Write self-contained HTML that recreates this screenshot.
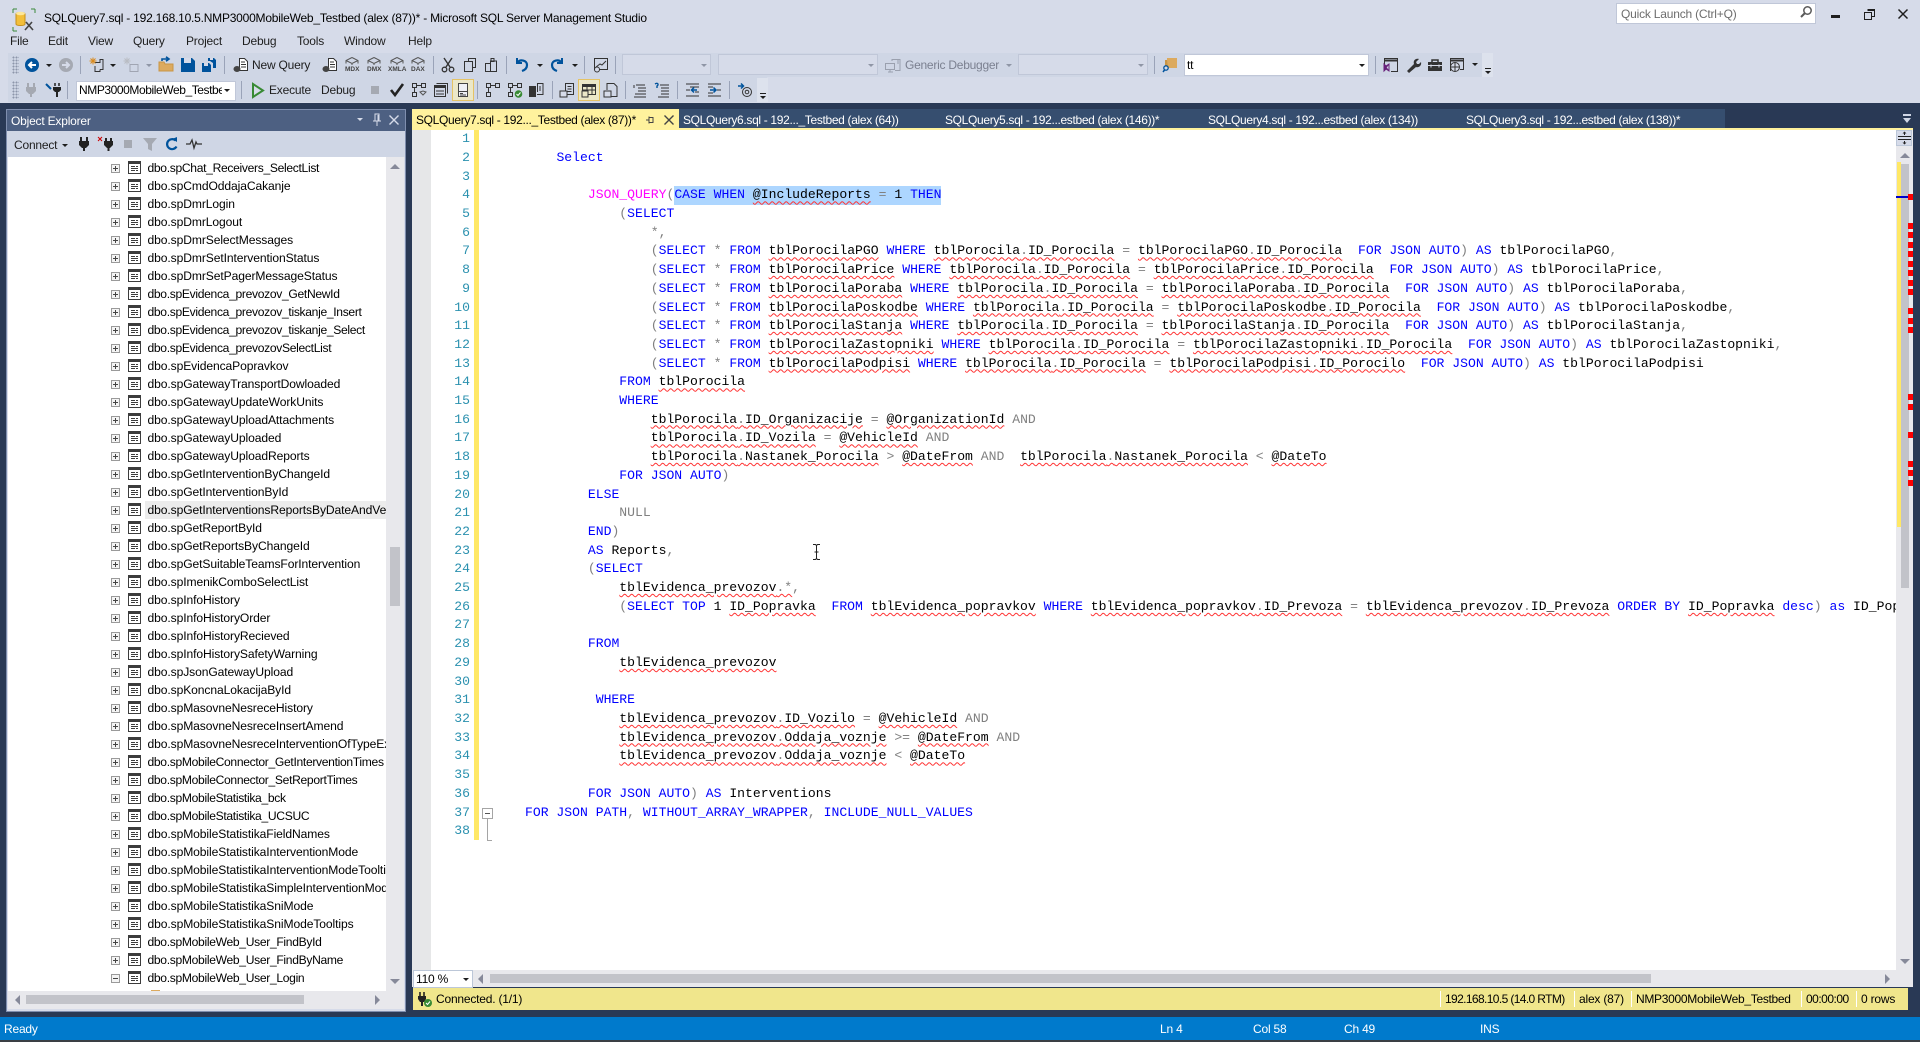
<!DOCTYPE html>
<html><head><meta charset="utf-8"><title>SSMS</title>
<style>
html,body{margin:0;padding:0;width:1920px;height:1042px;overflow:hidden;background:#293955}
body{position:relative;font-family:"Liberation Sans",sans-serif;font-size:12px;letter-spacing:-.2px;color:#1e1e1e}
.a,.t,svg.i{position:absolute}
.t{white-space:pre;line-height:16px;height:16px}
.tab{letter-spacing:-.33px}
svg.i{width:16px;height:16px;overflow:visible}
.sep{position:absolute;width:1px;background:#9aa3b8;height:18px}
.grip{position:absolute;width:7px;height:18px;background:radial-gradient(#8d96aa .9px,transparent 1.1px) 0 0/3px 3px}
.dd{position:absolute;width:0;height:0;border-left:3px solid transparent;border-right:3px solid transparent;border-top:3px solid #1e1e1e}
.dd.g{border-top-color:#8f96a6}
.cmb{position:absolute;box-sizing:border-box;border:1px solid #c0c7d8;background:#d6dbe9}
/* tree */
#tree{position:absolute;left:8px;top:157px;width:378px;height:834px;background:#fff;overflow:hidden;font-size:12.1px;letter-spacing:-.1px;color:#000}
.r{position:relative;height:18px;line-height:18px;padding-left:139.5px;white-space:nowrap;box-sizing:border-box}
.r.s{letter-spacing:-.32px}
.r:first-child{margin-top:2px}
.r::before{content:"";position:absolute;left:103px;top:5px;width:7px;height:7px;border:1px solid #9a9a9a;background:linear-gradient(#444,#444) center/5px 1px no-repeat,linear-gradient(#444,#444) center/1px 5px no-repeat,#f4f4f4}
.r.mn::before{background:linear-gradient(#444,#444) center/5px 1px no-repeat,#f4f4f4}
.r svg{position:absolute;left:120px;top:2px;width:13px;height:13px}
.r.h{background:linear-gradient(90deg,#fff 137px,#ececec 137px)}
/* code */
#num,#code{position:absolute;font-family:"Liberation Mono",monospace;font-size:13.1px;letter-spacing:0;line-height:18.7px;white-space:pre;margin:0}
#num{left:431px;width:39px;top:130.2px;text-align:right;color:#2b91af}
#code{left:525px;top:130.2px;width:1371px;height:800px;overflow:hidden;color:#000}
.k{color:#00f}.g{color:#808080}.m{color:#f0f}
u{text-decoration:underline wavy #f33;text-decoration-thickness:1px;text-underline-offset:2px}
</style></head>
<body>
<svg width="0" height="0" style="position:absolute"><defs>
<symbol id="sp" viewBox="0 0 13 13"><rect x=".5" y=".5" width="12" height="12" fill="#fff" stroke="#3c3c3c"/><rect x="0" y="0" width="13" height="3" fill="#3c3c3c"/><path d="M3 5.500h4M3 7.500h7M3 9.500h4M8 5.500h2M8 9.500h2" stroke="#3c3c3c" fill="none"/></symbol>
<symbol id="cube" viewBox="0 0 16 12"><path d="M8 .5l6 3v3M8 .5l-6 3v3M2 3.500l6 3 6-3M8 6.500V8" fill="none" stroke="#555"/></symbol>
</defs></svg>

<!-- top chrome -->
<div class="a" style="left:0;top:0;width:1920px;height:103px;background:#d6dbe9"></div>
<svg class="i" style="left:12px;top:8px;width:24px;height:24px" viewBox="0 0 24 24"><path d="M1 1h4M1 1v4M19 1h4M23 1v4M1 23h4M1 19v4" stroke="#3a8a3a" fill="none"/><path d="M4 6c0-2 9-2 9 0v10c0 2-9 2-9 0z" fill="#f3bf3a" stroke="#c48f1a"/><ellipse cx="8.500" cy="5.500" rx="4.500" ry="1.800" fill="#fde79a"/><path d="M13 22l7-8M14 14l7 8" stroke="#444" stroke-width="1.600"/></svg>
<div class="t" style="left:44px;top:10px;color:#000;letter-spacing:-.22px">SQLQuery7.sql - 192.168.10.5.NMP3000MobileWeb_Testbed (alex (87))* - Microsoft SQL Server Management Studio</div>

<div class="t" style="left:10px;top:33px">File</div>
<div class="t" style="left:48px;top:33px">Edit</div>
<div class="t" style="left:88px;top:33px">View</div>
<div class="t" style="left:133px;top:33px">Query</div>
<div class="t" style="left:186px;top:33px">Project</div>
<div class="t" style="left:242px;top:33px">Debug</div>
<div class="t" style="left:297px;top:33px">Tools</div>
<div class="t" style="left:344px;top:33px">Window</div>
<div class="t" style="left:408px;top:33px">Help</div>

<!-- quick launch -->
<div class="a" style="left:1616px;top:3px;width:198px;height:19px;background:#fff;border:1px solid #c0c7d8"></div>
<div class="t" style="left:1621px;top:6px;color:#6d6d6d">Quick Launch (Ctrl+Q)</div>
<svg class="i" style="left:1799px;top:5px;width:14px;height:14px" viewBox="0 0 14 14"><circle cx="8.500" cy="5.500" r="3.700" fill="none" stroke="#5a5a5a" stroke-width="1.500"/><path d="M6 8l-4 4" stroke="#5a5a5a" stroke-width="2"/></svg>
<div class="a" style="left:1831px;top:15px;width:9px;height:3px;background:#1e1e1e"></div>
<svg class="i" style="left:1864px;top:9px;width:11px;height:11px" viewBox="0 0 11 11"><path d="M3.500.5h7v7h-3M.5 3.500h7v7h-7z" fill="none" stroke="#1e1e1e"/><path d="M.5 3.500h7M3.500 1.500h7" stroke="#1e1e1e"/></svg>
<svg class="i" style="left:1898px;top:9px;width:10px;height:10px" viewBox="0 0 10 10"><path d="M.5.500l9 9M9.500.500l-9 9" stroke="#1e1e1e" stroke-width="1.500"/></svg>

<!-- toolbar 1 bg -->
<div class="a" style="left:8px;top:53px;width:1484px;height:24px;background:#cfd6e5"></div>
<div class="a" style="left:8px;top:77px;width:759px;height:25px;background:#cfd6e5"></div>
<div class="a" style="left:1482px;top:53px;width:11px;height:24px;background:#dde2ed"></div>
<div class="a" style="left:757px;top:78px;width:11px;height:24px;background:#dde2ed"></div>
<div class="grip" style="left:12px;top:56px"></div>
<div class="grip" style="left:12px;top:81px"></div>

<svg class="i" style="left:24px;top:57px" viewBox="0 0 16 16"><circle cx="8" cy="8" r="7" fill="#00539c"/><path d="M12 8H5M8 5L5 8l3 3" fill="none" stroke="#fff" stroke-width="2"/></svg>
<div class="dd" style="left:46px;top:64px"></div>
<svg class="i" style="left:58px;top:57px" viewBox="0 0 16 16"><circle cx="8" cy="8" r="7" fill="#a5a9b2"/><path d="M4 8h7M8 5l3 3-3 3" fill="none" stroke="#d6dbe9" stroke-width="2"/></svg>
<div class="sep" style="left:80px;top:56px"></div>
<svg class="i" style="left:89px;top:57px" viewBox="0 0 16 16"><path d="M6 5.500h5V2.500h3v10h-3M6 9v5.500h5v-2" fill="none" stroke="#333"/><path d="M4 .5v7M.5 4h7M1.500 1.500l5 5M6.500 1.500l-5 5" stroke="#d98a1e"/></svg>
<div class="dd" style="left:110px;top:64px"></div>
<svg class="i" style="left:123px;top:57px" viewBox="0 0 16 16"><path d="M7 7.500h8v7H7z" fill="none" stroke="#a0a5b2"/><path d="M4 .5v7M.5 4h7M1.500 1.500l5 5M6.500 1.500l-5 5" stroke="#b9bcc3"/></svg>
<div class="dd g" style="left:146px;top:64px"></div>
<svg class="i" style="left:158px;top:56px" viewBox="0 0 16 16"><path d="M1 6h5l1 2h8v7H1z" fill="#dcaa5f" stroke="#c99545"/><path d="M4 5V3h7M8 .8l3 2.200-3 2.200" fill="none" stroke="#00539c" stroke-width="1.600"/></svg>
<svg class="i" style="left:180px;top:57px" viewBox="0 0 16 16"><path d="M1 1h11l3 3v11H1z" fill="#00539c"/><rect x="4" y="1" width="7" height="5" fill="#d6dbe9"/></svg>
<svg class="i" style="left:201px;top:57px" viewBox="0 0 16 16"><path d="M1 6h7l2 2v7H1z" fill="#00539c"/><path d="M7 1h6l2 2v8h-3V6L9 4H7z" fill="#00539c"/><rect x="3" y="6" width="4" height="3" fill="#d6dbe9"/><rect x="9" y="1" width="3" height="2" fill="#d6dbe9"/></svg>
<div class="sep" style="left:224px;top:56px"></div>
<svg class="i" style="left:233px;top:57px" viewBox="0 0 16 16"><path d="M6.500 1.500h5l3 3v9h-8z" fill="#fff" stroke="#333"/><path d="M8 5h4M8 7.500h5M8 10h5" stroke="#333"/><ellipse cx="4" cy="12" rx="3.500" ry="3" fill="#444"/></svg>
<div class="t" style="left:252px;top:57px">New Query</div>
<svg class="i" style="left:322px;top:57px" viewBox="0 0 16 16"><path d="M6.500 1.500h5l3 3v9h-8z" fill="#fff" stroke="#333"/><path d="M8 5h4M8 7.500h5M8 10h5" stroke="#333"/><ellipse cx="4" cy="12" rx="3.500" ry="3" fill="#444"/></svg>
<svg class="i" style="left:344px;top:57px;height:12px" viewBox="0 0 16 12"><use href="#cube"/></svg><div class="t" style="left:345px;top:66px;font-size:6.500px;font-weight:bold;color:#444;line-height:8px;height:8px;letter-spacing:0">MDX</div>
<svg class="i" style="left:366px;top:57px;height:12px" viewBox="0 0 16 12"><use href="#cube"/></svg><div class="t" style="left:367px;top:66px;font-size:6.500px;font-weight:bold;color:#444;line-height:8px;height:8px;letter-spacing:0">DMX</div>
<svg class="i" style="left:389px;top:57px;height:12px" viewBox="0 0 16 12"><use href="#cube"/></svg><div class="t" style="left:388px;top:66px;font-size:6.500px;font-weight:bold;color:#444;line-height:8px;height:8px;letter-spacing:0">XMLA</div>
<svg class="i" style="left:410px;top:57px;height:12px" viewBox="0 0 16 12"><use href="#cube"/></svg><div class="t" style="left:411px;top:66px;font-size:6.500px;font-weight:bold;color:#444;line-height:8px;height:8px;letter-spacing:0">DAX</div>
<div class="sep" style="left:433px;top:56px"></div>
<svg class="i" style="left:440px;top:57px" viewBox="0 0 16 16"><path d="M4 1l6 9M12 1L6 10" stroke="#333" stroke-width="1.400" fill="none"/><circle cx="4.500" cy="12.500" r="2.300" fill="none" stroke="#333" stroke-width="1.300"/><circle cx="11.500" cy="12.500" r="2.300" fill="none" stroke="#333" stroke-width="1.300"/></svg>
<svg class="i" style="left:462px;top:57px" viewBox="0 0 16 16"><path d="M6.500 4V1.500h7v9H11M2.500 4.500h8v10h-8z" fill="none" stroke="#333"/></svg>
<svg class="i" style="left:483px;top:57px" viewBox="0 0 16 16"><path d="M2.500 6.500h5v8h-5zM7.500 6.500V4h6v10.500h-6" fill="none" stroke="#333"/><path d="M8 1.500h3v3H8z" fill="none" stroke="#333"/></svg>
<div class="sep" style="left:506px;top:56px"></div>
<svg class="i" style="left:514px;top:57px" viewBox="0 0 16 16"><path d="M3 1v5h5" fill="none" stroke="#00539c" stroke-width="2"/><path d="M3.500 5.500C6 2 13 3 13 8c0 3-2 5-5 6" fill="none" stroke="#00539c" stroke-width="2.200"/></svg>
<div class="dd" style="left:537px;top:64px"></div>
<svg class="i" style="left:549px;top:57px" viewBox="0 0 16 16"><path d="M13 1v5H8" fill="none" stroke="#00539c" stroke-width="2"/><path d="M12.500 5.500C10 2 3 3 3 8c0 3 2 5 5 6" fill="none" stroke="#00539c" stroke-width="2.200"/></svg>
<div class="dd" style="left:572px;top:64px"></div>
<div class="sep" style="left:584px;top:56px"></div>
<svg class="i" style="left:593px;top:57px" viewBox="0 0 16 16"><path d="M1.500 1.500h13v11h-13z" fill="none" stroke="#333"/><path d="M3 10l4-3 2 1 4-4" fill="none" stroke="#333"/><circle cx="4" cy="12.500" r="2.500" fill="#d6dbe9" stroke="#333"/></svg>
<div class="sep" style="left:615px;top:56px"></div>
<div class="cmb" style="left:622px;top:54px;width:89px;height:21px"></div><div class="dd g" style="left:701px;top:64px"></div>
<div class="cmb" style="left:718px;top:54px;width:160px;height:21px"></div><div class="dd g" style="left:868px;top:64px"></div>
<svg class="i" style="left:885px;top:57px" viewBox="0 0 16 16"><path d="M.5 6.500h9v6h-9zM3 15h5M5 13v2M7 4V2.500h8v11h-5" fill="none" stroke="#9aa0ae"/><path d="M12 4h2M12 6h2" stroke="#9aa0ae"/></svg>
<div class="t" style="left:905px;top:57px;color:#7b8090;letter-spacing:-.25px">Generic Debugger</div>
<div class="dd g" style="left:1006px;top:64px"></div>
<div class="cmb" style="left:1018px;top:54px;width:130px;height:21px"></div><div class="dd g" style="left:1138px;top:64px"></div>
<div class="sep" style="left:1154px;top:56px"></div>
<svg class="i" style="left:1162px;top:57px" viewBox="0 0 16 16"><rect x="5" y="1" width="10" height="10" fill="#dcaa5f"/><path d="M5 3h-2v8h3" fill="#c99545"/><circle cx="4" cy="11" r="2.200" fill="#d6dbe9" stroke="#00539c" stroke-width="1.300"/><path d="M2.500 13L1 15" stroke="#00539c" stroke-width="1.500"/></svg>
<div class="a" style="left:1184px;top:54px;width:183px;height:20px;background:#fff;border:1px solid #c0c7d8"></div>
<div class="t" style="left:1187px;top:57px;color:#000">tt</div>
<div class="dd" style="left:1359px;top:64px"></div>
<div class="sep" style="left:1375px;top:56px"></div>
<svg class="i" style="left:1383px;top:57px" viewBox="0 0 16 16"><path d="M1.500 9V1.500h13v13H8" fill="none" stroke="#333"/><path d="M1 3.500h14" stroke="#333" stroke-width="2"/><path d="M1 7l2 2 3-2v7l-3-2-2 2zM6 7l-3 3.500L6 14" fill="#68217a" stroke="#68217a"/></svg>
<svg class="i" style="left:1405px;top:57px" viewBox="0 0 16 16"><path d="M2 14l7-7c-1-3 1-6 5-5l-3 3 1 2 2 0 2-2c1 4-3 6-5 5l-7 6z" fill="#333"/></svg>
<svg class="i" style="left:1427px;top:57px" viewBox="0 0 16 16"><path d="M1 5h14v9H1z" fill="#333"/><path d="M5 5V3h6v2" fill="none" stroke="#333" stroke-width="1.500"/><path d="M1 8.500h14M4 7.500v3M12 7.500v3" stroke="#d6dbe9"/></svg>
<svg class="i" style="left:1449px;top:57px" viewBox="0 0 16 16"><path d="M1.500 14V1.500h13v11H11" fill="none" stroke="#333"/><path d="M1 3.500h14" stroke="#333" stroke-width="2"/><circle cx="6" cy="10" r="4.500" fill="#d6dbe9" stroke="#333"/><path d="M1.500 10h9M6 5.500v9" stroke="#333"/></svg>
<div class="dd" style="left:1472px;top:63px"></div>
<div class="a" style="left:1485px;top:68px;width:6px;height:1px;background:#1e1e1e"></div><div class="dd" style="left:1485px;top:71px"></div>

<!-- toolbar 2 -->
<svg class="i" style="left:23px;top:82px" viewBox="0 0 16 16"><path d="M5 1v4M11 1v4" stroke="#a5a9b2" stroke-width="2"/><path d="M3 5h10v4l-3 3H6L3 9z" fill="#a5a9b2"/><path d="M8 12v3" stroke="#a5a9b2" stroke-width="2"/></svg>
<svg class="i" style="left:45px;top:82px" viewBox="0 0 16 16"><path d="M1 2l5 5" stroke="#00539c" stroke-width="2"/><path d="M10 1v3M14 1v3" stroke="#222" stroke-width="1.500"/><path d="M8 5h8v3l-2 2h-4L8 8z" fill="#222"/><path d="M12 10v5" stroke="#222" stroke-width="2"/></svg>
<div class="sep" style="left:67px;top:81px"></div>
<div class="a" style="left:76px;top:81px;width:158px;height:18px;background:#fff;border:1px solid #c0c7d8;box-sizing:content-box"></div>
<div class="a" style="left:79px;top:82px;width:143px;height:16px;overflow:hidden;white-space:nowrap;line-height:16px;color:#000;letter-spacing:-.42px">NMP3000MobileWeb_Testbed</div>
<div class="dd" style="left:224px;top:89px"></div>
<div class="sep" style="left:241px;top:81px"></div>
<svg class="i" style="left:250px;top:82px" viewBox="0 0 16 16"><path d="M3 2l10 6.500L3 15z" fill="#d6dbe9" stroke="#388a34" stroke-width="2"/></svg>
<div class="t" style="left:269px;top:82px">Execute</div>
<div class="t" style="left:321px;top:82px">Debug</div>
<div class="a" style="left:371px;top:86px;width:8px;height:8px;background:#a5a9b2"></div>
<svg class="i" style="left:389px;top:82px" viewBox="0 0 16 16"><path d="M2 8l4 5L14 2" fill="none" stroke="#222" stroke-width="2.600"/></svg>
<svg class="i" style="left:411px;top:82px" viewBox="0 0 16 16"><path d="M1.500 1.500h4v4h-4zM10.500 1.500h4v4h-4zM1.500 10.500h4v4h-4zM5.500 3.500h5M3.500 5.500v5" fill="none" stroke="#333"/><path d="M9 10l3 3 3-3-3-1z" fill="none" stroke="#555"/></svg>
<svg class="i" style="left:433px;top:82px" viewBox="0 0 16 16"><path d="M3.500 1.500h11v10M1.500 3.500h11v11h-11z" fill="none" stroke="#333"/><rect x="1" y="3" width="12" height="3" fill="#333"/><path d="M3 9h8M3 12h8" stroke="#333"/></svg>
<div class="a" style="left:452px;top:79px;width:20px;height:20px;border:1px solid #e5c365;background:#ebe7c8"></div>
<svg class="i" style="left:455px;top:82px" viewBox="0 0 16 16"><path d="M3.500 1.500h9v13h-9z" fill="#eef0f6" stroke="#444"/><rect x="3" y="9" width="10" height="1" fill="#444"/><path d="M5 11.500h3M5 13h6" stroke="#444"/></svg>
<div class="sep" style="left:477px;top:81px"></div>
<svg class="i" style="left:485px;top:82px" viewBox="0 0 16 16"><path d="M1.500 1.500h4v4h-4zM10.500 1.500h4v4h-4zM1.500 10.500h4v4h-4zM5.500 3.500h5M3.500 5.500v5" fill="none" stroke="#333"/></svg>
<svg class="i" style="left:507px;top:82px" viewBox="0 0 16 16"><path d="M1.500 1.500h4v4h-4zM10.500 1.500h4v4h-4zM1.500 10.500h4v4h-4zM5.500 3.500h5M3.500 5.500v5" fill="none" stroke="#333"/><circle cx="11.500" cy="12" r="3.800" fill="#388a34"/><path d="M9.500 12l1.500 1.500 2.500-3" stroke="#fff" fill="none"/></svg>
<svg class="i" style="left:528px;top:82px" viewBox="0 0 16 16"><rect x="1" y="4" width="7" height="11" fill="#333"/><path d="M9.500 10V1.500h5.500v11H9" fill="none" stroke="#333"/><path d="M12 9V4" stroke="#333"/></svg>
<div class="sep" style="left:552px;top:81px"></div>
<svg class="i" style="left:559px;top:82px" viewBox="0 0 16 16"><path d="M6.500 9V1.500h8v11H8" fill="none" stroke="#333"/><path d="M8.500 4.500h4M8.500 7h4M8.500 9.500h4" stroke="#333"/><rect x="1" y="9" width="7" height="6" fill="#d6dbe9" stroke="#333"/></svg>
<div class="a" style="left:578px;top:79px;width:20px;height:20px;background:#ebe7c8;border:1px solid #e5c365"></div>
<svg class="i" style="left:581px;top:82px" viewBox="0 0 16 16"><path d="M1.500 2.500h13v10h-13z" fill="none" stroke="#333"/><rect x="1" y="2" width="14" height="3" fill="#333"/><path d="M1 8h14M6 5v8M11 5v8" stroke="#333"/><rect x="1" y="9" width="6" height="6" fill="#ebe7c8" stroke="#333"/></svg>
<svg class="i" style="left:603px;top:82px" viewBox="0 0 16 16"><path d="M4 8V1.500h7l3 3v10H8" fill="none" stroke="#333"/><rect x="1" y="9" width="7" height="6" fill="#d6dbe9" stroke="#333"/></svg>
<div class="sep" style="left:625px;top:81px"></div>
<svg class="i" style="left:632px;top:82px" viewBox="0 0 16 16"><path d="M2 3v3M4 3h9M6 6h8M6 9h8M3 12h11M2 15h12" stroke="#333" fill="none"/></svg>
<svg class="i" style="left:654px;top:82px" viewBox="0 0 16 16"><path d="M1 2c3-2 4 1 2 2v2" stroke="#00539c" fill="none" stroke-width="1.400"/><path d="M6 3h9M7 6h8M7 9h8M7 12h8M4 15h11" stroke="#333"/></svg>
<div class="sep" style="left:677px;top:81px"></div>
<svg class="i" style="left:685px;top:82px" viewBox="0 0 16 16"><path d="M1 2h13M1 14h13M1 8h4M5 5h9M10 10h4" stroke="#333"/><path d="M12 8H7M9 5.500L6.500 8 9 10.500" stroke="#00539c" stroke-width="1.500" fill="none"/></svg>
<svg class="i" style="left:707px;top:82px" viewBox="0 0 16 16"><path d="M1 2h13M1 14h13M10 8h4M1 5h5M1 11h5" stroke="#333"/><path d="M3 8h6M6.500 5.500L9 8l-2.500 2.500" stroke="#00539c" stroke-width="1.500" fill="none"/></svg>
<div class="sep" style="left:729px;top:81px"></div>
<svg class="i" style="left:737px;top:82px" viewBox="0 0 16 16"><circle cx="10" cy="10" r="4.500" fill="none" stroke="#333"/><circle cx="10" cy="10" r="1.800" fill="none" stroke="#333"/><path d="M1 4h5M4 1.500L6.500 4 4 6.500" stroke="#00539c" stroke-width="1.500" fill="none"/></svg>
<div class="a" style="left:760px;top:93px;width:6px;height:1px;background:#1e1e1e"></div><div class="dd" style="left:760px;top:96px"></div>

<!-- Object Explorer -->
<div class="a" style="left:6px;top:109px;width:400px;height:903px;background:#d6dbe9;box-shadow:inset 0 0 0 1px #7f8eae"></div>
<div class="a" style="left:7px;top:110px;width:398px;height:21px;background:#4d6082"></div>
<div class="t" style="left:11px;top:113px;color:#fff">Object Explorer</div>
<div class="dd" style="left:357px;top:118px;border-top-color:#d6dbe9"></div>
<svg class="i" style="left:371px;top:113px;width:12px;height:14px" viewBox="0 0 12 14"><path d="M4 1h4v7H4zM2 8h8M6 8v5M7 2v6" fill="none" stroke="#d6dbe9"/></svg>
<svg class="i" style="left:389px;top:115px;width:10px;height:10px" viewBox="0 0 10 10"><path d="M.5.500l9 9M9.500.500l-9 9" stroke="#d6dbe9" stroke-width="1.400"/></svg>
<div class="a" style="left:7px;top:131px;width:398px;height:26px;background:#cfd6e5"></div>
<div class="t" style="left:14px;top:137px">Connect</div>
<div class="dd" style="left:62px;top:144px"></div>
<svg class="i" style="left:76px;top:136px" viewBox="0 0 16 16"><path d="M5 1v4M11 1v4" stroke="#222" stroke-width="2"/><path d="M3 5h10v4l-3 3H6L3 9z" fill="#222"/><path d="M8 12v3" stroke="#222" stroke-width="2"/></svg>
<svg class="i" style="left:98px;top:136px" viewBox="0 0 16 16"><path d="M8 2v3M13 2v3" stroke="#222" stroke-width="2"/><path d="M6 5h9v4l-3 3H9L6 9z" fill="#222"/><path d="M10.500 12v3" stroke="#222" stroke-width="2"/><path d="M0 1l4 4M4 1L0 5" stroke="#c00"/></svg>
<div class="a" style="left:124px;top:140px;width:8px;height:8px;background:#a5a9b2"></div>
<svg class="i" style="left:142px;top:136px" viewBox="0 0 16 16"><path d="M1 2h14l-5 6v7l-4-2V8z" fill="#a5a9b2"/></svg>
<svg class="i" style="left:164px;top:136px" viewBox="0 0 16 16"><path d="M12.500 10.500a5 5 0 1 1-1-6" fill="none" stroke="#00539c" stroke-width="2.200"/><path d="M8 3l5-2v5z" fill="#00539c"/></svg>
<svg class="i" style="left:186px;top:136px" viewBox="0 0 16 16"><path d="M0 8h4l2-4 2 8 2-6 1 2h5" fill="none" stroke="#333" stroke-width="1.300"/></svg>

<div id="tree">
<div class="r s"><svg><use href="#sp"/></svg>dbo.spChat_Receivers_SelectList</div>
<div class="r"><svg><use href="#sp"/></svg>dbo.spCmdOddajaCakanje</div>
<div class="r"><svg><use href="#sp"/></svg>dbo.spDmrLogin</div>
<div class="r"><svg><use href="#sp"/></svg>dbo.spDmrLogout</div>
<div class="r"><svg><use href="#sp"/></svg>dbo.spDmrSelectMessages</div>
<div class="r"><svg><use href="#sp"/></svg>dbo.spDmrSetInterventionStatus</div>
<div class="r"><svg><use href="#sp"/></svg>dbo.spDmrSetPagerMessageStatus</div>
<div class="r s"><svg><use href="#sp"/></svg>dbo.spEvidenca_prevozov_GetNewId</div>
<div class="r s"><svg><use href="#sp"/></svg>dbo.spEvidenca_prevozov_tiskanje_Insert</div>
<div class="r s"><svg><use href="#sp"/></svg>dbo.spEvidenca_prevozov_tiskanje_Select</div>
<div class="r s"><svg><use href="#sp"/></svg>dbo.spEvidenca_prevozovSelectList</div>
<div class="r"><svg><use href="#sp"/></svg>dbo.spEvidencaPopravkov</div>
<div class="r"><svg><use href="#sp"/></svg>dbo.spGatewayTransportDowloaded</div>
<div class="r"><svg><use href="#sp"/></svg>dbo.spGatewayUpdateWorkUnits</div>
<div class="r"><svg><use href="#sp"/></svg>dbo.spGatewayUploadAttachments</div>
<div class="r"><svg><use href="#sp"/></svg>dbo.spGatewayUploaded</div>
<div class="r"><svg><use href="#sp"/></svg>dbo.spGatewayUploadReports</div>
<div class="r"><svg><use href="#sp"/></svg>dbo.spGetInterventionByChangeId</div>
<div class="r"><svg><use href="#sp"/></svg>dbo.spGetInterventionById</div>
<div class="r h"><svg><use href="#sp"/></svg>dbo.spGetInterventionsReportsByDateAndVehicleId</div>
<div class="r"><svg><use href="#sp"/></svg>dbo.spGetReportById</div>
<div class="r"><svg><use href="#sp"/></svg>dbo.spGetReportsByChangeId</div>
<div class="r"><svg><use href="#sp"/></svg>dbo.spGetSuitableTeamsForIntervention</div>
<div class="r"><svg><use href="#sp"/></svg>dbo.spImenikComboSelectList</div>
<div class="r"><svg><use href="#sp"/></svg>dbo.spInfoHistory</div>
<div class="r"><svg><use href="#sp"/></svg>dbo.spInfoHistoryOrder</div>
<div class="r"><svg><use href="#sp"/></svg>dbo.spInfoHistoryRecieved</div>
<div class="r"><svg><use href="#sp"/></svg>dbo.spInfoHistorySafetyWarning</div>
<div class="r"><svg><use href="#sp"/></svg>dbo.spJsonGatewayUpload</div>
<div class="r"><svg><use href="#sp"/></svg>dbo.spKoncnaLokacijaById</div>
<div class="r"><svg><use href="#sp"/></svg>dbo.spMasovneNesreceHistory</div>
<div class="r"><svg><use href="#sp"/></svg>dbo.spMasovneNesreceInsertAmend</div>
<div class="r"><svg><use href="#sp"/></svg>dbo.spMasovneNesreceInterventionOfTypeEx</div>
<div class="r s"><svg><use href="#sp"/></svg>dbo.spMobileConnector_GetInterventionTimes</div>
<div class="r s"><svg><use href="#sp"/></svg>dbo.spMobileConnector_SetReportTimes</div>
<div class="r s"><svg><use href="#sp"/></svg>dbo.spMobileStatistika_bck</div>
<div class="r s"><svg><use href="#sp"/></svg>dbo.spMobileStatistika_UCSUC</div>
<div class="r"><svg><use href="#sp"/></svg>dbo.spMobileStatistikaFieldNames</div>
<div class="r"><svg><use href="#sp"/></svg>dbo.spMobileStatistikaInterventionMode</div>
<div class="r"><svg><use href="#sp"/></svg>dbo.spMobileStatistikaInterventionModeTooltips</div>
<div class="r"><svg><use href="#sp"/></svg>dbo.spMobileStatistikaSimpleInterventionMode</div>
<div class="r"><svg><use href="#sp"/></svg>dbo.spMobileStatistikaSniMode</div>
<div class="r"><svg><use href="#sp"/></svg>dbo.spMobileStatistikaSniModeTooltips</div>
<div class="r s"><svg><use href="#sp"/></svg>dbo.spMobileWeb_User_FindById</div>
<div class="r s"><svg><use href="#sp"/></svg>dbo.spMobileWeb_User_FindByName</div>
<div class="r s mn"><svg><use href="#sp"/></svg>dbo.spMobileWeb_User_Login</div>
</div>
<div class="a" style="left:151px;top:990px;width:9px;height:1px;background:#dcaa5f"></div>
<!-- OE scrollbars -->
<div class="a" style="left:386px;top:157px;width:18px;height:834px;background:#e8e8ec"></div>
<div class="a" style="left:390px;top:164px;border-left:5px solid transparent;border-right:5px solid transparent;border-bottom:5px solid #868999"></div>
<div class="a" style="left:390px;top:547px;width:10px;height:59px;background:#c2c3c9"></div>
<div class="a" style="left:390px;top:979px;border-left:5px solid transparent;border-right:5px solid transparent;border-top:5px solid #868999"></div>
<div class="a" style="left:8px;top:991px;width:396px;height:18px;background:#e8e8ec"></div>
<div class="a" style="left:26px;top:995px;width:278px;height:9px;background:#c2c3c9"></div>
<div class="a" style="left:15px;top:995px;border-top:5px solid transparent;border-bottom:5px solid transparent;border-right:5px solid #868999"></div>
<div class="a" style="left:375px;top:995px;border-top:5px solid transparent;border-bottom:5px solid transparent;border-left:5px solid #868999"></div>

<!-- tabs -->
<div class="a" style="left:679px;top:109px;width:1046px;height:19px;background:#364e6f"></div>
<div class="a" style="left:412px;top:109px;width:267px;height:19px;background:#fff29d"></div>
<div class="a" style="left:412px;top:128px;width:1501px;height:2px;background:#fff29d"></div>
<div class="t tab" style="left:416px;top:112px;color:#000">SQLQuery7.sql - 192..._Testbed (alex (87))*</div>
<svg class="i" style="left:645px;top:115px;width:10px;height:10px" viewBox="0 0 10 10"><path d="M1 5h3M4 2.500h4v5H4zM4 1.500v7" fill="none" stroke="#444"/></svg>
<svg class="i" style="left:664px;top:115px;width:10px;height:10px" viewBox="0 0 10 10"><path d="M.5.500l9 9M9.500.500l-9 9" stroke="#444" stroke-width="1.400"/></svg>
<div class="t tab" style="left:683px;top:112px;color:#fff">SQLQuery6.sql - 192..._Testbed (alex (64))</div>
<div class="t tab" style="left:945px;top:112px;color:#fff">SQLQuery5.sql - 192...estbed (alex (146))*</div>
<div class="t tab" style="left:1208px;top:112px;color:#fff">SQLQuery4.sql - 192...estbed (alex (134))</div>
<div class="t tab" style="left:1466px;top:112px;color:#fff">SQLQuery3.sql - 192...estbed (alex (138))*</div>
<div class="a" style="left:1903px;top:114px;width:8px;height:2px;background:#cfd6e5"></div>
<div class="dd" style="left:1903px;top:118px;border-left-width:4px;border-right-width:4px;border-top:5px solid #cfd6e5"></div>

<!-- editor -->
<div class="a" style="left:412px;top:130px;width:1484px;height:840px;background:#fff"></div>
<div class="a" style="left:412px;top:130px;width:19px;height:840px;background:#e6e7e8"></div>
<div class="a" style="left:474px;top:130px;width:5px;height:710px;background:#ffe866"></div>
<div class="a" style="left:674px;top:186px;width:267px;height:19px;background:#add6ff"></div>
<pre id="num">1
2
3
4
5
6
7
8
9
10
11
12
13
14
15
16
17
18
19
20
21
22
23
24
25
26
27
28
29
30
31
32
33
34
35
36
37
38</pre>
<pre id="code">

    <span class="k">Select</span>

        <span class="m">JSON_QUERY</span><span class="g">(</span><span class="k">CASE WHEN</span> <u>@IncludeReports</u> <span class="g">=</span> 1 <span class="k">THEN</span>
            <span class="g">(</span><span class="k">SELECT</span>
                <span class="g">*,</span>
                <span class="g">(</span><span class="k">SELECT</span> <span class="g">*</span> <span class="k">FROM</span> <u>tblPorocilaPGO</u> <span class="k">WHERE</span> <u>tblPorocila<span class="g">.</span>ID_Porocila</u> <span class="g">=</span> <u>tblPorocilaPGO<span class="g">.</span>ID_Porocila</u>  <span class="k">FOR JSON AUTO</span><span class="g">)</span> <span class="k">AS</span> tblPorocilaPGO<span class="g">,</span>
                <span class="g">(</span><span class="k">SELECT</span> <span class="g">*</span> <span class="k">FROM</span> <u>tblPorocilaPrice</u> <span class="k">WHERE</span> <u>tblPorocila<span class="g">.</span>ID_Porocila</u> <span class="g">=</span> <u>tblPorocilaPrice<span class="g">.</span>ID_Porocila</u>  <span class="k">FOR JSON AUTO</span><span class="g">)</span> <span class="k">AS</span> tblPorocilaPrice<span class="g">,</span>
                <span class="g">(</span><span class="k">SELECT</span> <span class="g">*</span> <span class="k">FROM</span> <u>tblPorocilaPoraba</u> <span class="k">WHERE</span> <u>tblPorocila<span class="g">.</span>ID_Porocila</u> <span class="g">=</span> <u>tblPorocilaPoraba<span class="g">.</span>ID_Porocila</u>  <span class="k">FOR JSON AUTO</span><span class="g">)</span> <span class="k">AS</span> tblPorocilaPoraba<span class="g">,</span>
                <span class="g">(</span><span class="k">SELECT</span> <span class="g">*</span> <span class="k">FROM</span> <u>tblPorocilaPoskodbe</u> <span class="k">WHERE</span> <u>tblPorocila<span class="g">.</span>ID_Porocila</u> <span class="g">=</span> <u>tblPorocilaPoskodbe<span class="g">.</span>ID_Porocila</u>  <span class="k">FOR JSON AUTO</span><span class="g">)</span> <span class="k">AS</span> tblPorocilaPoskodbe<span class="g">,</span>
                <span class="g">(</span><span class="k">SELECT</span> <span class="g">*</span> <span class="k">FROM</span> <u>tblPorocilaStanja</u> <span class="k">WHERE</span> <u>tblPorocila<span class="g">.</span>ID_Porocila</u> <span class="g">=</span> <u>tblPorocilaStanja<span class="g">.</span>ID_Porocila</u>  <span class="k">FOR JSON AUTO</span><span class="g">)</span> <span class="k">AS</span> tblPorocilaStanja<span class="g">,</span>
                <span class="g">(</span><span class="k">SELECT</span> <span class="g">*</span> <span class="k">FROM</span> <u>tblPorocilaZastopniki</u> <span class="k">WHERE</span> <u>tblPorocila<span class="g">.</span>ID_Porocila</u> <span class="g">=</span> <u>tblPorocilaZastopniki<span class="g">.</span>ID_Porocila</u>  <span class="k">FOR JSON AUTO</span><span class="g">)</span> <span class="k">AS</span> tblPorocilaZastopniki<span class="g">,</span>
                <span class="g">(</span><span class="k">SELECT</span> <span class="g">*</span> <span class="k">FROM</span> <u>tblPorocilaPodpisi</u> <span class="k">WHERE</span> <u>tblPorocila<span class="g">.</span>ID_Porocila</u> <span class="g">=</span> <u>tblPorocilaPodpisi<span class="g">.</span>ID_Porocilo</u>  <span class="k">FOR JSON AUTO</span><span class="g">)</span> <span class="k">AS</span> tblPorocilaPodpisi
            <span class="k">FROM</span> <u>tblPorocila</u>
            <span class="k">WHERE</span>
                <u>tblPorocila<span class="g">.</span>ID_Organizacije</u> <span class="g">=</span> <u>@OrganizationId</u> <span class="g">AND</span>
                <u>tblPorocila<span class="g">.</span>ID_Vozila</u> <span class="g">=</span> <u>@VehicleId</u> <span class="g">AND</span>
                <u>tblPorocila<span class="g">.</span>Nastanek_Porocila</u> <span class="g">&gt;</span> <u>@DateFrom</u> <span class="g">AND</span>  <u>tblPorocila<span class="g">.</span>Nastanek_Porocila</u> <span class="g">&lt;</span> <u>@DateTo</u>
            <span class="k">FOR JSON AUTO</span><span class="g">)</span>
        <span class="k">ELSE</span>
            <span class="g">NULL</span>
        <span class="k">END</span><span class="g">)</span>
        <span class="k">AS</span> Reports<span class="g">,</span>
        <span class="g">(</span><span class="k">SELECT</span>
            <u>tblEvidenca_prevozov<span class="g">.*</span></u><span class="g">,</span>
            <span class="g">(</span><span class="k">SELECT TOP</span> 1 <u>ID_Popravka</u>  <span class="k">FROM</span> <u>tblEvidenca_popravkov</u> <span class="k">WHERE</span> <u>tblEvidenca_popravkov<span class="g">.</span>ID_Prevoza</u> <span class="g">=</span> <u>tblEvidenca_prevozov<span class="g">.</span>ID_Prevoza</u> <span class="k">ORDER BY</span> <u>ID_Popravka</u> <span class="k">desc</span><span class="g">)</span> <span class="k">as</span> ID_Popravka

        <span class="k">FROM</span>
            <u>tblEvidenca_prevozov</u>

         <span class="k">WHERE</span>
            <u>tblEvidenca_prevozov<span class="g">.</span>ID_Vozilo</u> <span class="g">=</span> <u>@VehicleId</u> <span class="g">AND</span>
            <u>tblEvidenca_prevozov<span class="g">.</span>Oddaja_voznje</u> <span class="g">&gt;=</span> <u>@DateFrom</u> <span class="g">AND</span>
            <u>tblEvidenca_prevozov<span class="g">.</span>Oddaja_voznje</u> <span class="g">&lt;</span> <u>@DateTo</u>

        <span class="k">FOR JSON AUTO</span><span class="g">)</span> <span class="k">AS</span> Interventions
<span class="k">FOR JSON PATH</span><span class="g">,</span> <span class="k">WITHOUT_ARRAY_WRAPPER</span><span class="g">,</span> <span class="k">INCLUDE_NULL_VALUES</span>
</pre>
<!-- outline -->
<div class="a" style="left:482px;top:808px;width:9px;height:9px;border:1px solid #a5a5a5;background:linear-gradient(#555,#555) center/5px 1px no-repeat,#fff"></div>
<div class="a" style="left:487px;top:819px;width:1px;height:21px;background:#a5a5a5"></div>
<div class="a" style="left:487px;top:840px;width:5px;height:1px;background:#a5a5a5"></div>
<!-- ibeam -->
<svg class="i" style="left:812px;top:544px;width:9px;height:16px" viewBox="0 0 9 16"><path d="M1 .5h2.500l1 1 1-1H8M4.500 1.500v13M1 15.500h2.500l1-1 1 1H8M2.500 8h4" fill="none" stroke="#222"/></svg>

<!-- editor v scrollbar -->
<div class="a" style="left:1896px;top:130px;width:17px;height:857px;background:#e8e8ec"></div>
<div class="a" style="left:1896px;top:130px;width:16px;height:16px;background:#d6dbe9;border:1px solid #bcc7d8;box-sizing:border-box"></div>
<svg class="i" style="left:1898px;top:131px;width:13px;height:14px" viewBox="0 0 13 14"><path d="M0 5.500h13M0 8.500h13" stroke="#222"/><path d="M6.500 1v3M6.500 10v3" stroke="#222"/><path d="M4.500 2.500l2-2 2 2zM4.500 11.500l2 2 2-2z" fill="#222"/></svg>
<div class="a" style="left:1900px;top:153px;border-left:5px solid transparent;border-right:5px solid transparent;border-bottom:5px solid #868999"></div>
<div class="a" style="left:1901px;top:164px;width:8px;height:424px;background:#c2c3c9"></div>
<div class="a" style="left:1897px;top:162px;width:4px;height:365px;background:#ffe866"></div>
<div class="a" style="left:1896px;top:196px;width:12px;height:2px;background:#0000cd"></div>
<div class="a" style="left:1908px;top:194px;width:5px;height:6px;background:#f00"></div>
<div class="a" style="left:1908px;top:223px;width:5px;height:6px;background:#f00"></div>
<div class="a" style="left:1908px;top:232px;width:5px;height:6px;background:#f00"></div>
<div class="a" style="left:1908px;top:242px;width:5px;height:6px;background:#f00"></div>
<div class="a" style="left:1908px;top:251px;width:5px;height:6px;background:#f00"></div>
<div class="a" style="left:1908px;top:261px;width:5px;height:6px;background:#f00"></div>
<div class="a" style="left:1908px;top:270px;width:5px;height:6px;background:#f00"></div>
<div class="a" style="left:1908px;top:280px;width:5px;height:6px;background:#f00"></div>
<div class="a" style="left:1908px;top:289px;width:5px;height:6px;background:#f00"></div>
<div class="a" style="left:1908px;top:308px;width:5px;height:6px;background:#f00"></div>
<div class="a" style="left:1908px;top:318px;width:5px;height:6px;background:#f00"></div>
<div class="a" style="left:1908px;top:327px;width:5px;height:6px;background:#f00"></div>
<div class="a" style="left:1908px;top:394px;width:5px;height:6px;background:#f00"></div>
<div class="a" style="left:1908px;top:404px;width:5px;height:6px;background:#f00"></div>
<div class="a" style="left:1908px;top:432px;width:5px;height:6px;background:#f00"></div>
<div class="a" style="left:1908px;top:461px;width:5px;height:6px;background:#f00"></div>
<div class="a" style="left:1908px;top:470px;width:5px;height:6px;background:#f00"></div>
<div class="a" style="left:1908px;top:480px;width:5px;height:6px;background:#f00"></div>
<div class="a" style="left:1900px;top:959px;border-left:5px solid transparent;border-right:5px solid transparent;border-top:5px solid #868999"></div>

<!-- editor h scrollbar -->
<div class="a" style="left:412px;top:970px;width:1501px;height:17px;background:#e8e8ec"></div>
<div class="a" style="left:413px;top:970px;width:58px;height:16px;background:#fff;border:1px solid #bcc7d8"></div>
<div class="t" style="left:416px;top:971px;color:#000">110 %</div>
<div class="dd" style="left:463px;top:978px"></div>
<div class="a" style="left:478px;top:974px;border-top:5px solid transparent;border-bottom:5px solid transparent;border-right:5px solid #868999"></div>
<div class="a" style="left:490px;top:974px;width:1161px;height:9px;background:#c2c3c9"></div>
<div class="a" style="left:1885px;top:974px;border-top:5px solid transparent;border-bottom:5px solid transparent;border-left:5px solid #868999"></div>

<!-- query status -->
<div class="a" style="left:413px;top:988px;width:1495px;height:22px;background:#f0e68c"></div>
<svg class="i" style="left:416px;top:991px" viewBox="0 0 16 16"><path d="M4 1v4M8 1v4" stroke="#222" stroke-width="1.600"/><path d="M2 5h8v3l-2 3H4L2 8z" fill="#222"/><path d="M6 11v4" stroke="#222" stroke-width="2"/><circle cx="12" cy="12" r="4" fill="#388a34"/><path d="M10 12l1.500 1.500 2.500-3" stroke="#fff" fill="none"/></svg>
<div class="t" style="left:436px;top:991px;color:#000">Connected. (1/1)</div>
<div class="a" style="left:1440px;top:991px;width:1px;height:16px;background:#fff"></div>
<div class="t" style="left:1445px;top:991px;color:#000;letter-spacing:-.62px">192.168.10.5 (14.0 RTM)</div>
<div class="a" style="left:1574px;top:991px;width:1px;height:16px;background:#fff"></div>
<div class="t" style="left:1579px;top:991px;color:#000">alex (87)</div>
<div class="a" style="left:1631px;top:991px;width:1px;height:16px;background:#fff"></div>
<div class="t" style="left:1636px;top:991px;color:#000;letter-spacing:-.3px">NMP3000MobileWeb_Testbed</div>
<div class="a" style="left:1801px;top:991px;width:1px;height:16px;background:#fff"></div>
<div class="t" style="left:1806px;top:991px;color:#000;letter-spacing:-.5px">00:00:00</div>
<div class="a" style="left:1856px;top:991px;width:1px;height:16px;background:#fff"></div>
<div class="t" style="left:1861px;top:991px;color:#000">0 rows</div>

<!-- status bar -->
<div class="a" style="left:0;top:1017px;width:1920px;height:23px;background:#007acc"></div>
<div class="a" style="left:0;top:1040px;width:1920px;height:2px;background:#3a3f44"></div>
<div class="t" style="left:4px;top:1021px;color:#fff">Ready</div>
<div class="t" style="left:1160px;top:1021px;color:#fff">Ln 4</div>
<div class="t" style="left:1253px;top:1021px;color:#fff">Col 58</div>
<div class="t" style="left:1344px;top:1021px;color:#fff">Ch 49</div>
<div class="t" style="left:1480px;top:1021px;color:#fff">INS</div>
</body></html>
